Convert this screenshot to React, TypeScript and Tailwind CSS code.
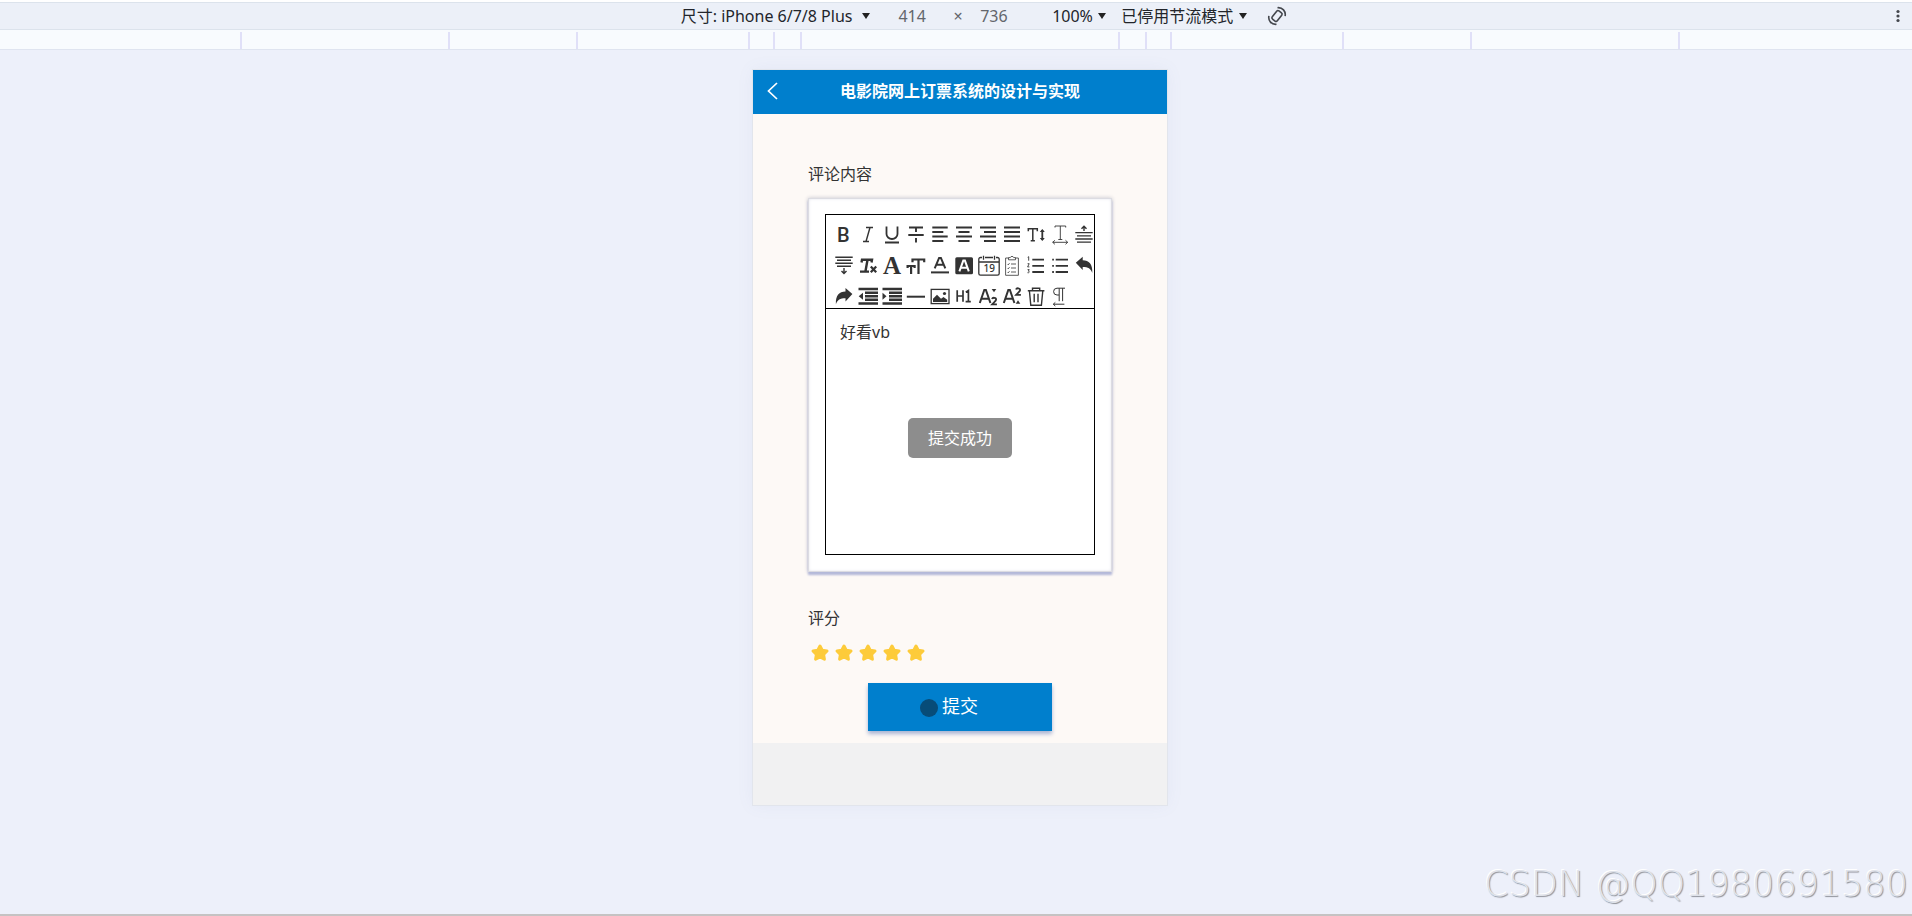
import React, { useState } from 'react';

const SANS = "font-['Noto_Sans','Noto_Sans_CJK_SC',sans-serif]";

interface Tool {
  name: string;
  icon: React.ReactNode;
}

const TOOLS: Tool[] = [
  { name: 'bold', icon: <text x="5" y="19.5" fontFamily="Roboto, sans-serif" fontWeight="500" fontSize="20" stroke="none" fill="currentColor">B</text> },
  { name: 'italic', icon: <path d="M10 5.5h7M7 19.5h6M14 5.5l-4 14" strokeWidth="1.4" /> },
  { name: 'underline', icon: <path d="M6.5 4.5v7.5a5.5 5 0 0 0 11 0V4.5M5 20.5h14" /> },
  { name: 'strike', icon: <path d="M5 5.5h14M4.3 13h15.4M12 5.5V10M12 16v4.5" strokeWidth="1.9" /> },
  { name: 'alignLeft', icon: <path d="M4.3 5.5h15.4M4.3 10h11M4.3 14.5h15.4M4.3 19h11" /> },
  { name: 'alignCenter', icon: <path d="M4 5.5h16M6.5 10h11M4 14.5h16M6.5 19h11" /> },
  { name: 'alignRight', icon: <path d="M4 5.5h16M8 10h12M4 14.5h16M8 19h12" /> },
  { name: 'alignJustify', icon: <path d="M4 5.5h16M4 10h16M4 14.5h16M4 19h16" /> },
  {
    name: 'fontSize',
    icon: (
      <>
        <path d="M4.3 9.3V6.7h9v2.6M8.8 6.7v12M6.7 18.7h4.2" strokeWidth="1.5" />
        <path d="M18.3 8v10" />
        <path d="M15.8 10l2.5-3 2.5 3zM15.8 16l2.5 3 2.5-3z" fill="currentColor" stroke="none" />
      </>
    ),
  },
  { name: 'letterSpacing', icon: <path d="M7 5.5V4h10.7v1.5M12.3 4v13.5M10.3 17.5h4M4.7 20.3h15M6.9 18.3l-2.2 2 2.2 2M17.5 18.3l2.2 2-2.2 2" strokeWidth="0.9" /> },
  {
    name: 'marginTop',
    icon: (
      <>
        <path d="M3.3 10.7h17.4M5 13.8h14M3.3 17h17.4M5 20.2h14" strokeWidth="1.3" />
        <path d="M12 4.5V9M9.5 6.8L12 4.2l2.5 2.6" strokeWidth="1.4" />
      </>
    ),
  },
  {
    name: 'marginBottom',
    icon: (
      <>
        <path d="M3.3 4.3h17.4M5 7.2h14M3.3 10.2h17.4M5 13.2h14" strokeWidth="1.5" />
        <path d="M12 15v5.3M9.5 18l2.5 2.5 2.5-2.5" strokeWidth="1.4" />
      </>
    ),
  },
  {
    name: 'clearFormat',
    icon: (
      <>
        <path d="M5.5 9.5l.5-2.8h10l-.5 2.8M11.5 7l-2 11M4 18.6h9" strokeWidth="2.4" />
        <path d="M14.8 13.5l5.4 5.8M20.2 13.5l-5.4 5.8" strokeWidth="2.2" />
      </>
    ),
  },
  { name: 'fontFamily', icon: <text x="3" y="20.5" fontFamily="'Liberation Serif', serif" fontWeight="700" fontSize="25" stroke="none" fill="currentColor">A</text> },
  { name: 'textSize', icon: <path d="M8.5 9.2V6.5h11.7v2.7M14.5 6.5V21M3.6 15v-2h7v2M7.1 13v8" strokeWidth="2.2" /> },
  {
    name: 'color',
    icon: (
      <>
        <path d="M6.7 15.3l4.4-10.4h1.8l4.4 10.4M8.4 11.8h7.2" strokeWidth="2" />
        <path d="M3 19.4h18" strokeWidth="2" />
      </>
    ),
  },
  {
    name: 'backgroundColor',
    icon: (
      <>
        <rect x="3.3" y="4.3" width="17.7" height="17" rx="1.5" fill="currentColor" stroke="none" />
        <path d="M7.4 18.4l3.9-10.8h1.6l3.9 10.8M9 14.7h6.2" stroke="#fff" strokeWidth="2" />
      </>
    ),
  },
  {
    name: 'date',
    icon: (
      <>
        <path d="M6 4.5H4.5a1.7 1.7 0 0 0-1.7 1.7v14.3a1.7 1.7 0 0 0 1.7 1.7h17a1.7 1.7 0 0 0 1.7-1.7V6.2a1.7 1.7 0 0 0-1.7-1.7H20M9 4.5h8M2.8 9h20.4M7.5 2.7v4M18.5 2.7v4" strokeWidth="1.3" />
        <text x="7.5" y="19.3" fontFamily="'Noto Sans', sans-serif" fontWeight="500" fontSize="10" stroke="none" fill="currentColor">19</text>
      </>
    ),
  },
  {
    name: 'checklist',
    icon: (
      <path
        d="M8.5 5H5.6v17.3h12.8V5h-2.9M8.5 6.8V4.6h1.8a1.8 1.8 0 0 1 3.4 0h1.8v2.2zM11 11h5M11 15h5M11 19h5M7.5 11l.8.8 1.2-1.6M7.5 15l.8.8 1.2-1.6M7.5 19l.8.8 1.2-1.6"
        strokeWidth="0.8"
      />
    ),
  },
  {
    name: 'orderedList',
    icon: (
      <>
        <path d="M8.3 6.7H20M8.3 12.8H20M8.3 19H20" />
        <path d="M3.7 4.3l1-.6v4M3.6 10.7h1.6l-1.6 3.2h1.8M3.6 16.6h1.6l-.8 1.5c1.4.2 1.2 2-.9 1.6" strokeWidth="0.9" />
      </>
    ),
  },
  {
    name: 'bulletList',
    icon: (
      <>
        <path d="M7.7 6.7H20M7.7 12.8H20M7.7 19H20" />
        <path d="M4.2 6.7h1.7M4.2 12.8h1.7M4.2 19h1.7" />
      </>
    ),
  },
  { name: 'undo', icon: <path d="M3.8 9.8L10.7 3.7v3.5c6.3.2 10 3.6 9.6 12.7-1.6-4.4-4-6-9.6-6v3.2z" fill="currentColor" stroke="none" /> },
  { name: 'redo', icon: <path d="M20.4 10.1L13.5 4v3.5c-6.3.2-10 3.6-9.6 12.7 1.6-4.4 4-6 9.6-6v3.2z" fill="currentColor" stroke="none" /> },
  {
    name: 'outdent',
    icon: (
      <>
        <path d="M2.5 5h19.5M9 8.8h13M9 12.3h13M9 15.8h13M2.5 19.5h19.5" strokeWidth="2.4" />
        <path d="M2.7 12.3l4.3-3.5v7z" fill="currentColor" stroke="none" />
      </>
    ),
  },
  {
    name: 'indent',
    icon: (
      <>
        <path d="M2.5 5h19.5M9 8.8h13M9 12.3h13M9 15.8h13M2.5 19.5h19.5" strokeWidth="2.4" />
        <path d="M6.5 12.3L2.5 8.8v7z" fill="currentColor" stroke="none" />
      </>
    ),
  },
  { name: 'divider', icon: <path d="M2.8 12.7H21" strokeWidth="2" /> },
  {
    name: 'image',
    icon: (
      <>
        <rect x="3.2" y="5.4" width="17.8" height="14.2" strokeWidth="1.3" />
        <path d="M5 18v-3.2l4-4 4 4 2.5-1.8 3.7 2.8V18z" fill="currentColor" stroke="none" />
        <circle cx="16.5" cy="9.5" r="1.6" fill="currentColor" stroke="none" />
      </>
    ),
  },
  { name: 'header', icon: <path d="M5.2 6.3v11.4M11 6.3v11.4M5.2 12H11M13.8 8.2l2.6-1.6v11M13.6 17.6h5.2" strokeWidth="1.7" /> },
  {
    name: 'subscript',
    icon: (
      <>
        <path d="M3.8 19l4.5-13h1.6l4.5 13M5.4 14.8h7.4" strokeWidth="2" />
        <path d="M16 15c.6-1.8 4.3-1.6 4.1.6-.1 1.5-2.2 2.6-4 4.7h4.8" strokeWidth="1.8" />
        <path d="M15.7 5h4.6L18 8.2z" fill="currentColor" stroke="none" />
      </>
    ),
  },
  {
    name: 'superscript',
    icon: (
      <>
        <path d="M3.8 19l4.5-13h1.6l4.5 13M5.4 14.8h7.4" strokeWidth="2" />
        <path d="M16 5.5c.6-1.8 4.3-1.6 4.1.6-.1 1.5-2.2 2.6-4 4.7h4.8" strokeWidth="1.8" />
        <path d="M15.7 19.7h4.6L18 16.2z" fill="currentColor" stroke="none" />
      </>
    ),
  },
  { name: 'clear', icon: <path d="M3.8 6.7h16.6M8.5 6.5V4.3h7.2v2.2M5.4 6.7l1.4 14.6h10.6l1.4-14.6M10.2 9.8v8.4M14 9.8v8.4" strokeWidth="1.4" /> },
  { name: 'direction', icon: <path d="M17 4.2H9a3.4 3.4 0 0 0 0 6.8h2M11.2 4.2v13M14.6 4.2v13M5.4 20.2h11M7.3 18.4l-2 1.8 2 1.8" strokeWidth="1" /> },
];

// widths of the media query bars between the ruler marks
const RULER = ['w-52', 'w-32', 'w-[172px]', 'w-[25px]', 'w-[27px]', 'w-[318px]', 'w-[27px]', 'w-[25px]', 'w-[172px]', 'w-32', 'w-52'];

const Caret = () => (
  <svg viewBox="0 0 8 6" className="w-2 h-[6px] ml-[5px] text-[#222]" aria-hidden="true">
    <path d="M0 0h8L4 6z" fill="currentColor" />
  </svg>
);

const DeviceBar: React.FC = () => {
  const [width, setWidth] = useState('414');
  const [height, setHeight] = useState('736');

  return (
    <header>
      <div className="h-[2px] bg-white" />
      <div className="h-7 border-y border-[#dce3ec] bg-[#ecf0f8] flex items-center text-base text-[#22252b]">
        <div className="flex-1 flex items-center justify-center pl-[84px]">
          <label htmlFor="device" className="mr-1">尺寸:</label>
          <select id="device" className="appearance-none bg-transparent outline-none mr-1">
            <option>iPhone 6/7/8 Plus</option>
          </select>
          <Caret />
          <input aria-label="宽度" value={width} onChange={(e) => setWidth(e.target.value)} className="w-12 ml-[18px] bg-transparent text-center text-[#63666c] outline-none" />
          <span className="w-11 text-center text-[#63666c]">×</span>
          <input aria-label="高度" value={height} onChange={(e) => setHeight(e.target.value)} className="w-12 mr-6 bg-transparent text-left text-[#63666c] outline-none" />
          <select aria-label="缩放" className="appearance-none bg-transparent outline-none">
            <option>100%</option>
          </select>
          <Caret />
          <select aria-label="节流" className="appearance-none bg-transparent outline-none ml-[15px]">
            <option>已停用节流模式</option>
          </select>
          <Caret />
          <button type="button" aria-label="旋转" className="ml-5">
            <svg viewBox="0 0 20 20" className="w-5 h-5" fill="none" stroke="#44474d" strokeWidth="1.6">
              <rect x="6.8" y="4.8" width="6.4" height="10.4" rx="1.6" transform="rotate(38 10 10)" />
              <path d="M10.5 1.7c2.600-.2 4.600.6 6 2.200 1.500 1.700 2.100 3.800 1.600 6.200M9.500 18.300c-2.600.2-4.600-.6-6-2.200-1.500-1.700-2.100-3.800-1.600-6.200" />
            </svg>
          </button>
        </div>
        <button type="button" aria-label="更多选项" className="w-7 flex justify-center">
          <svg viewBox="0 0 4 14" className="w-1 h-[14px]" fill="#44474d">
            <circle cx="2" cy="2.5" r="1.6" />
            <circle cx="2" cy="7" r="1.6" />
            <circle cx="2" cy="11.5" r="1.6" />
          </svg>
        </button>
      </div>
      <div className="h-5 pt-[2px] border-b border-[#dfe4f0] bg-[#f8fbfe] flex justify-center pl-2">
        <div className="flex border-l-2 border-[#e0e0f8]">
          {RULER.map((w, i) => (
            <div key={i} className={`${w} border-r-2 border-[#e0e0f8]`} />
          ))}
        </div>
      </div>
    </header>
  );
};

const ReviewPage: React.FC = () => {
  const [content, setContent] = useState('好看vb');
  const [score, setScore] = useState(5);

  return (
    <div className="relative w-[414px] bg-[#f1f1f2] pb-[62px] text-base text-[#333] shadow-[0_0_0_1px_#e2e5ec,0_0_16px_rgba(120,130,180,0.08)]">
      <div className="h-11 pb-[2px] bg-[#007fcd] text-white grid grid-cols-[44px_1fr_44px] items-center">
        <button type="button" aria-label="返回" className="pl-[10px]">
          <svg viewBox="0 0 20 20" className="w-5 h-5" fill="none" stroke="currentColor" strokeWidth="1.7">
            <path d="M14 2L5.5 10l8.5 8" />
          </svg>
        </button>
        <h1 className="text-center font-bold">电影院网上订票系统的设计与实现</h1>
      </div>

      <form onSubmit={(e) => e.preventDefault()} className="bg-[#fdf9f6] px-[55px] pt-12 pb-3">
        <label htmlFor="content" className="block leading-6">评论内容</label>
        <div className="mt-3 px-4 pt-[15px] pb-4 bg-white border border-[#dcdce2] shadow-[0_3px_2px_#b4b9d9,0_0_4px_#c4c4cc,inset_0_0_3px_#e4e4ee]">
          <div className="border border-black">
            <div className="grid grid-cols-[repeat(11,24px)] gap-y-[7px] pl-[6px] pt-[7px] border-b border-black text-[#333]">
              {TOOLS.map((t) => (
                <button key={t.name} type="button" aria-label={t.name} className="w-6 h-6">
                  <svg viewBox="0 0 24 24" className="w-6 h-6 overflow-visible" fill="none" stroke="currentColor" strokeWidth="1.8">
                    {t.icon}
                  </svg>
                </button>
              ))}
            </div>
            <textarea
              id="content"
              value={content}
              onChange={(e) => setContent(e.target.value)}
              className="block w-full h-[245px] px-[14px] py-[11px] leading-6 resize-none outline-none"
            />
          </div>
        </div>

        <fieldset className="mt-[34px]">
          <legend className="leading-6">评分</legend>
          <div className="flex items-center h-6 mt-[11px]">
            {[1, 2, 3, 4, 5].map((n) => (
              <label key={n} className="w-6 h-6 flex items-center justify-center cursor-pointer">
                <input type="radio" name="score" aria-label={`${n} 星`} checked={score === n} onChange={() => setScore(n)} className="sr-only" />
                <svg viewBox="0 0 24 24" className="w-6 h-6" fill={n <= score ? '#fdcb3a' : '#ddd'} stroke={n <= score ? '#fdcb3a' : '#ddd'} strokeWidth="3" strokeLinejoin="round">
                  <path d="M12 5l2.2 4.3 4.8.7-3.4 3.4.8 4.8-4.4-2.2-4.4 2.2.8-4.8L5 10l4.8-.7z" />
                </svg>
              </label>
            ))}
          </div>
        </fieldset>

        <button type="submit" className="relative block w-[184px] h-12 mx-auto mt-[18px] pb-[2px] bg-[#007fcd] text-white text-lg shadow-[0_3px_4px_#a9b4d4]">
          提交
          <span className="absolute left-[52px] top-4 w-[18px] h-[18px] rounded-full bg-[#074c78]" />
        </button>
      </form>

      <div role="status" className="absolute left-1/2 top-1/2 -translate-x-1/2 -translate-y-1/2 px-5 py-2 rounded-[5px] bg-[#8d8d8d] text-white whitespace-nowrap">
        提交成功
      </div>
    </div>
  );
};

const App: React.FC = () => (
  <div className={`${SANS} relative min-h-screen flex flex-col bg-[#edf0fa] border-b-2 border-[#c5c3c3]`}>
    <DeviceBar />
    <main className="flex-1 flex justify-center items-start pl-2 pt-5 pb-12">
      <ReviewPage />
    </main>
    <p className="absolute right-1 bottom-[6px] font-['DejaVu_Sans',sans-serif] font-extralight text-[35px] leading-[48px] text-[#dfe2ea] [text-shadow:1px_1px_1px_#8f929a,-1px_-1px_0_#fff]">
      CSDN @QQ1980691580
    </p>
  </div>
);

export default App;
